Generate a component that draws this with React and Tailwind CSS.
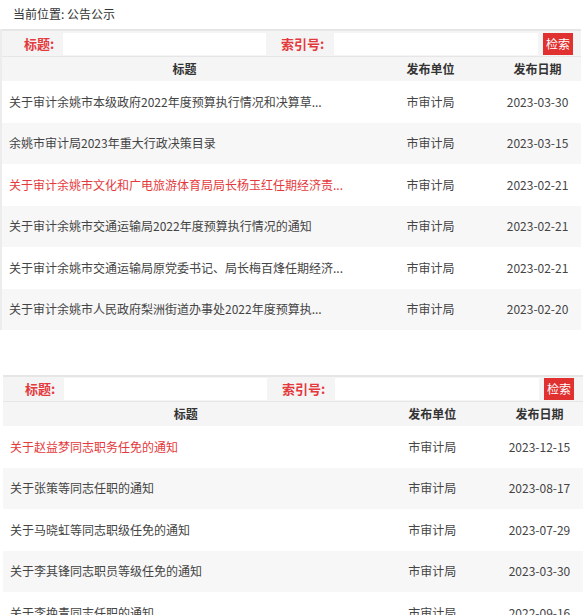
const font = { fontFamily: '"Noto Sans CJK SC", "Liberation Sans", sans-serif' };

// 公告公示 list
const noticeRows = [
  { title: '关于审计余姚市本级政府2022年度预算执行情况和决算草...', unit: '市审计局', date: '2023-03-30' },
  { title: '余姚市审计局2023年重大行政决策目录', unit: '市审计局', date: '2023-03-15' },
  { title: '关于审计余姚市文化和广电旅游体育局局长杨玉红任期经济责...', unit: '市审计局', date: '2023-02-21', hot: true },
  { title: '关于审计余姚市交通运输局2022年度预算执行情况的通知', unit: '市审计局', date: '2023-02-21' },
  { title: '关于审计余姚市交通运输局原党委书记、局长梅百烽任期经济...', unit: '市审计局', date: '2023-02-21' },
  { title: '关于审计余姚市人民政府梨洲街道办事处2022年度预算执...', unit: '市审计局', date: '2023-02-20' },
];

// 人事任免 list
const personnelRows = [
  { title: '关于赵益梦同志职务任免的通知', unit: '市审计局', date: '2023-12-15', hot: true },
  { title: '关于张策等同志任职的通知', unit: '市审计局', date: '2023-08-17' },
  { title: '关于马晓虹等同志职级任免的通知', unit: '市审计局', date: '2023-07-29' },
  { title: '关于李其锋同志职员等级任免的通知', unit: '市审计局', date: '2023-03-30' },
  { title: '关于李挽青同志任职的通知', unit: '市审计局', date: '2022-09-16' },
];

const SearchBar = ({ height }) => (
  <div className={`flex items-center bg-[#f4f4f4] border-t-2 border-b border-[#e6e6e6] ${height}`}>
    <span className="pl-[22px] w-[61px] text-[13px] font-bold text-[#e4393c]">标题:</span>
    <input className="w-[203px] h-[22px] bg-white outline-none" />
    <span className="ml-[15px] w-[53px] text-[13px] font-bold text-[#e4393c]">索引号:</span>
    <input className="w-[204px] h-[22px] bg-white outline-none" />
    <button className="ml-[5px] w-[30px] h-[22px] bg-[#e0302f] text-white text-[12px] leading-none">检索</button>
  </div>
);

const ListTable = ({ rows, wrapper, barHeight }) => (
  <div className={wrapper}>
    <SearchBar height={barHeight} />
    <div className="grid grid-cols-[63%_22%_15%] h-[24px] items-center bg-[#f5f5f5] text-[12px] font-bold text-[#333]">
      <div className="text-center">标题</div>
      <div className="text-center">发布单位</div>
      <div className="text-center">发布日期</div>
    </div>
    {rows.map((row, i) => (
      <div
        key={i}
        className={`grid grid-cols-[63%_22%_15%] h-[41.5px] items-center text-[12px] ${i % 2 === 1 ? 'bg-[#f7f7f7]' : 'bg-white'}`}
      >
        <div className={`pl-[7px] whitespace-nowrap overflow-hidden ${row.hot ? 'text-[#e4393c]' : 'text-[#444]'}`}>{row.title}</div>
        <div className="text-center text-[#444]">{row.unit}</div>
        <div className="text-center text-[#444]">{row.date}</div>
      </div>
    ))}
  </div>
);

export default function App() {
  return (
    <div className="w-[586px] h-[615px] overflow-hidden bg-white" style={font}>
      <div className="h-[29px] pl-[13px] pt-[5px] text-[12px] text-[#333]">当前位置: 公告公示</div>
      <ListTable rows={noticeRows} wrapper="w-[581px] border-l-2 border-[#ececec]" barHeight="h-[28px]" />
      <div className="h-[45px]" />
      <ListTable rows={personnelRows} wrapper="ml-[3px] w-[580px]" barHeight="h-[27px]" />
    </div>
  );
}
